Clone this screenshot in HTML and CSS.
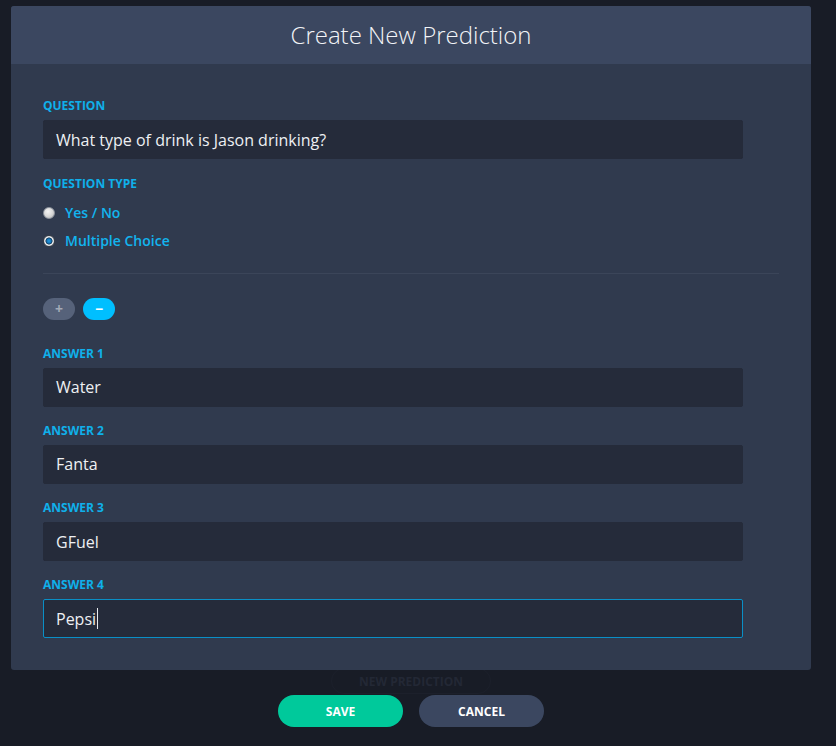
FILE: index.html
```html
<!DOCTYPE html>
<html lang="en">
<head>
<meta charset="utf-8">
<title>Create New Prediction</title>
<link rel="stylesheet" href="styles.css">
</head>
<body>
<div class="modal">
  <div class="modal-header">
    <h1 class="modal-title">Create New Prediction</h1>
  </div>
  <div class="modal-body">
    <div class="field first">
      <div class="label">QUESTION</div>
      <div class="input">What type of drink is Jason drinking?</div>
    </div>
    <div class="field">
      <div class="label">QUESTION TYPE</div>
      <div class="radios">
        <div class="radio-row"><span class="radio"></span><span class="radio-label">Yes / No</span></div>
        <div class="radio-row"><span class="radio checked"></span><span class="radio-label">Multiple Choice</span></div>
      </div>
    </div>
    <div class="divider"></div>
    <div class="pills">
      <span class="pill pill-add">+</span>
      <span class="pill pill-remove">&minus;</span>
    </div>
    <div class="field">
      <div class="label">ANSWER 1</div>
      <div class="input">Water</div>
    </div>
    <div class="field">
      <div class="label">ANSWER 2</div>
      <div class="input">Fanta</div>
    </div>
    <div class="field">
      <div class="label">ANSWER 3</div>
      <div class="input">GFuel</div>
    </div>
    <div class="field last">
      <div class="label">ANSWER 4</div>
      <div class="input focused">Pepsi<span class="caret"></span></div>
    </div>
  </div>
</div>
<div class="footer">
  <div class="ghost">NEW PREDICTION</div>
  <div class="actions">
    <span class="btn btn-save">SAVE</span>
    <span class="btn btn-cancel">CANCEL</span>
  </div>
</div>
</body>
</html>
```

FILE: styles.css
```css
* { box-sizing: border-box; }
html, body {
  margin: 0;
  padding: 0;
  background: #181c26;
  font-family: "Open Sans", "Liberation Sans", sans-serif;
}
body {
  width: 836px;
  height: 746px;
  overflow: hidden;
  padding: 6px 0 0 11px;
}
.modal {
  position: relative;
  z-index: 2;
  width: 800px;
  border-radius: 3px;
  overflow: hidden;
  background: #303a4e;
}
.modal-header {
  height: 58px;
  background: #3b4760;
  display: flex;
  align-items: center;
  justify-content: center;
}
.modal-title {
  margin: 0;
  font-size: 24px;
  font-weight: 300;
  color: #f2f4f7;
  line-height: 32px;
}
.modal-body {
  padding: 34px 32px 32px 32px;
}
.field { margin-bottom: 16.33px; }
.field.first { margin-bottom: 17px; }
.field.last { margin-bottom: 0; }
.label {
  font-size: 12px;
  line-height: 16px;
  font-weight: 700;
  color: #0fb0ea;
  margin-bottom: 6px;
}
.input {
  width: 700px;
  height: 39px;
  background: #252b3a;
  border: 1px solid #252b3a;
  border-radius: 2px;
  padding: 0 12px;
  display: flex;
  align-items: center;
  font-size: 16px;
  color: #eef0f3;
}
.input.focused { border-color: #0a8fc6; }
.caret {
  display: inline-block;
  width: 1px;
  height: 21px;
  background: #e8eaee;
  margin-left: 1px;
}
.radios {
  display: flex;
  flex-direction: column;
  gap: 8px;
  margin-top: 10.5px;
}
.radio-row {
  display: flex;
  align-items: center;
  gap: 10px;
  height: 20px;
}
.radio {
  width: 12px;
  height: 12px;
  border-radius: 50%;
  border: 1px solid #8e949e;
  background: radial-gradient(circle at 40% 35%, #f4f4f4 0%, #d6d6d6 55%, #a9abaf 100%);
  margin-top: 1px;
}
.radio.checked {
  border: 1px solid #3a3f47;
  background: radial-gradient(circle, #2a9be0 0%, #1275b8 30%, #163a5a 45%, #f2f3f5 55%, #cfd2d6 80%, #9ea2a8 100%);
}
.radio-label {
  font-size: 14px;
  line-height: 20px;
  font-weight: 600;
  color: #12b4ef;
}
.divider {
  height: 1px;
  background: #3b4559;
  margin: 22px 0 24px;
}
.pills {
  display: flex;
  gap: 8px;
  margin-bottom: 26px;
}
.pill {
  width: 32px;
  height: 22px;
  border-radius: 11px;
  display: flex;
  align-items: center;
  justify-content: center;
  font-size: 14px;
  font-weight: 700;
  line-height: 1;
}
.pill-add { background: #56627a; color: #a3aab7; }
.pill-remove { background: #00bfff; color: #ffffff; }
.footer {
  position: relative;
  width: 800px;
  display: flex;
  flex-direction: column;
  align-items: center;
}
.ghost {
  position: relative;
  z-index: 1;
  margin-top: -2px;
  width: 160px;
  height: 26px;
  border: 1px solid #1c202b;
  border-radius: 13px;
  display: flex;
  align-items: center;
  justify-content: center;
  font-size: 12px;
  font-weight: 700;
  color: #232835;
}
.actions {
  display: flex;
  gap: 16px;
  margin-top: 1px;
}
.btn {
  width: 125px;
  height: 32px;
  border-radius: 16px;
  display: flex;
  align-items: center;
  justify-content: center;
  font-size: 12px;
  font-weight: 700;
  color: #ffffff;
}
.btn-save { background: #00c99b; }
.btn-cancel { background: #3b4760; }
```
